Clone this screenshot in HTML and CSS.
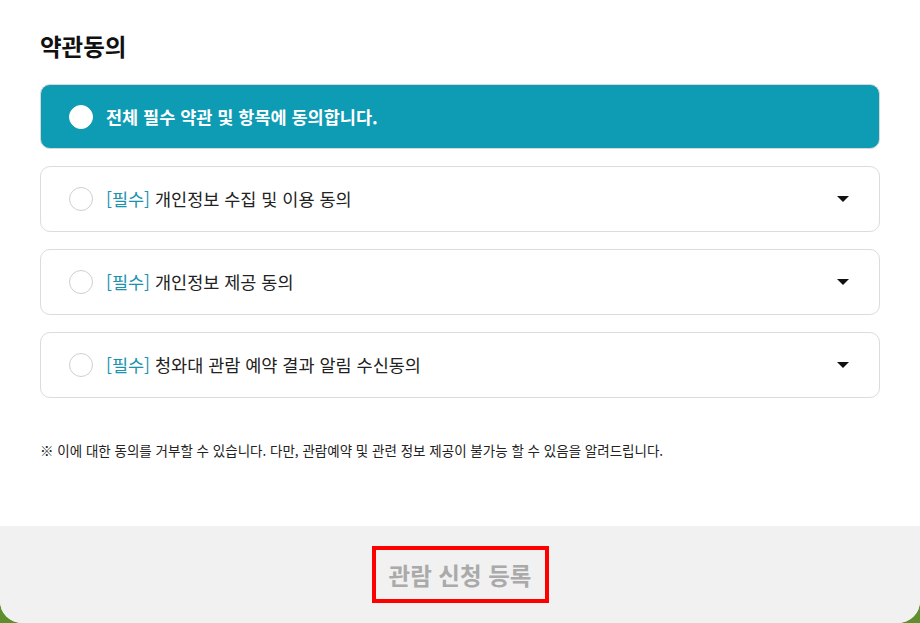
FILE: index.html
```html
<!DOCTYPE html>
<html lang="ko">
<head>
<meta charset="utf-8">
<title>약관동의</title>
<link rel="stylesheet" href="styles.css">
</head>
<body>
<div class="modal">
  <div class="content">
    <h2 class="title">약관동의</h2>
    <ul class="terms">
      <li class="row row-all">
        <span class="check check-all"></span>
        <span class="label">전체 필수 약관 및 항목에 동의합니다.</span>
      </li>
      <li class="row">
        <span class="check"></span>
        <span class="label"><em class="req">[필수]</em> 개인정보 수집 및 이용 동의</span>
        <span class="caret"></span>
      </li>
      <li class="row">
        <span class="check"></span>
        <span class="label"><em class="req">[필수]</em> 개인정보 제공 동의</span>
        <span class="caret"></span>
      </li>
      <li class="row">
        <span class="check"></span>
        <span class="label"><em class="req">[필수]</em> 청와대 관람 예약 결과 알림 수신동의</span>
        <span class="caret"></span>
      </li>
    </ul>
    <p class="note">※ 이에 대한 동의를 거부할 수 있습니다. 다만, 관람예약 및 관련 정보 제공이 불가능 할 수 있음을 알려드립니다.</p>
  </div>
  <div class="footer">
    <button class="submit" type="button">관람 신청 등록</button>
  </div>
</div>
</body>
</html>
```

FILE: styles.css
```css
* { box-sizing: border-box; }
html, body { margin: 0; padding: 0; }
body {
  width: 920px;
  height: 623px;
  background: #5e8f2c;
  font-family: "Noto Sans CJK KR", "Noto Sans", sans-serif;
  color: #222;
  overflow: hidden;
}
.modal {
  width: 920px;
  height: 623px;
  background: #fff;
  border-radius: 0 0 22px 22px;
  overflow: hidden;
  display: flex;
  flex-direction: column;
}
.content {
  flex: 1;
  padding: 31px 40px 0;
}
.title {
  margin: 0 0 23px;
  font-size: 23.5px;
  line-height: 30px;
  font-weight: 700;
  color: #111;
}
.terms {
  list-style: none;
  margin: 0;
  padding: 0;
  display: flex;
  flex-direction: column;
  gap: 17px;
}
.row {
  height: 66px;
  border: 1px solid #dcdcdc;
  border-radius: 10px;
  display: flex;
  align-items: center;
  padding: 0 30px 0 28px;
  gap: 13px;
}
.row-all {
  height: 65px;
  background: #0e9bb4;
  border-color: #d8d8d8;
}
.check {
  width: 24px;
  height: 24px;
  border-radius: 50%;
  border: 1px solid #cfcfcf;
  background: #fff;
  flex: none;
}
.check-all { border-color: #fff; }
.label {
  flex: 1;
  font-size: 17.5px;
  line-height: 24px;
  color: #222;
}
.row-all .label {
  color: #fff;
  font-weight: 700;
}
.req {
  font-style: normal;
  color: #1b93ae;
}
.caret {
  width: 0;
  height: 0;
  border-left: 6px solid transparent;
  border-right: 6px solid transparent;
  border-top: 6px solid #111;
  flex: none;
}
.note {
  margin: 42px 0 0;
  font-size: 13.5px;
  line-height: 20px;
  color: #222;
}
.footer {
  height: 97px;
  background: #f1f1f1;
  display: flex;
  justify-content: center;
  padding-top: 20px;
}
.submit {
  width: 177px;
  height: 57px;
  border: 4px solid #ff0000;
  background: transparent;
  font-family: "Noto Sans CJK KR", "Noto Sans", sans-serif;
  font-size: 23.5px;
  font-weight: 700;
  color: #aaaaaa;
  padding: 0;
}
```
